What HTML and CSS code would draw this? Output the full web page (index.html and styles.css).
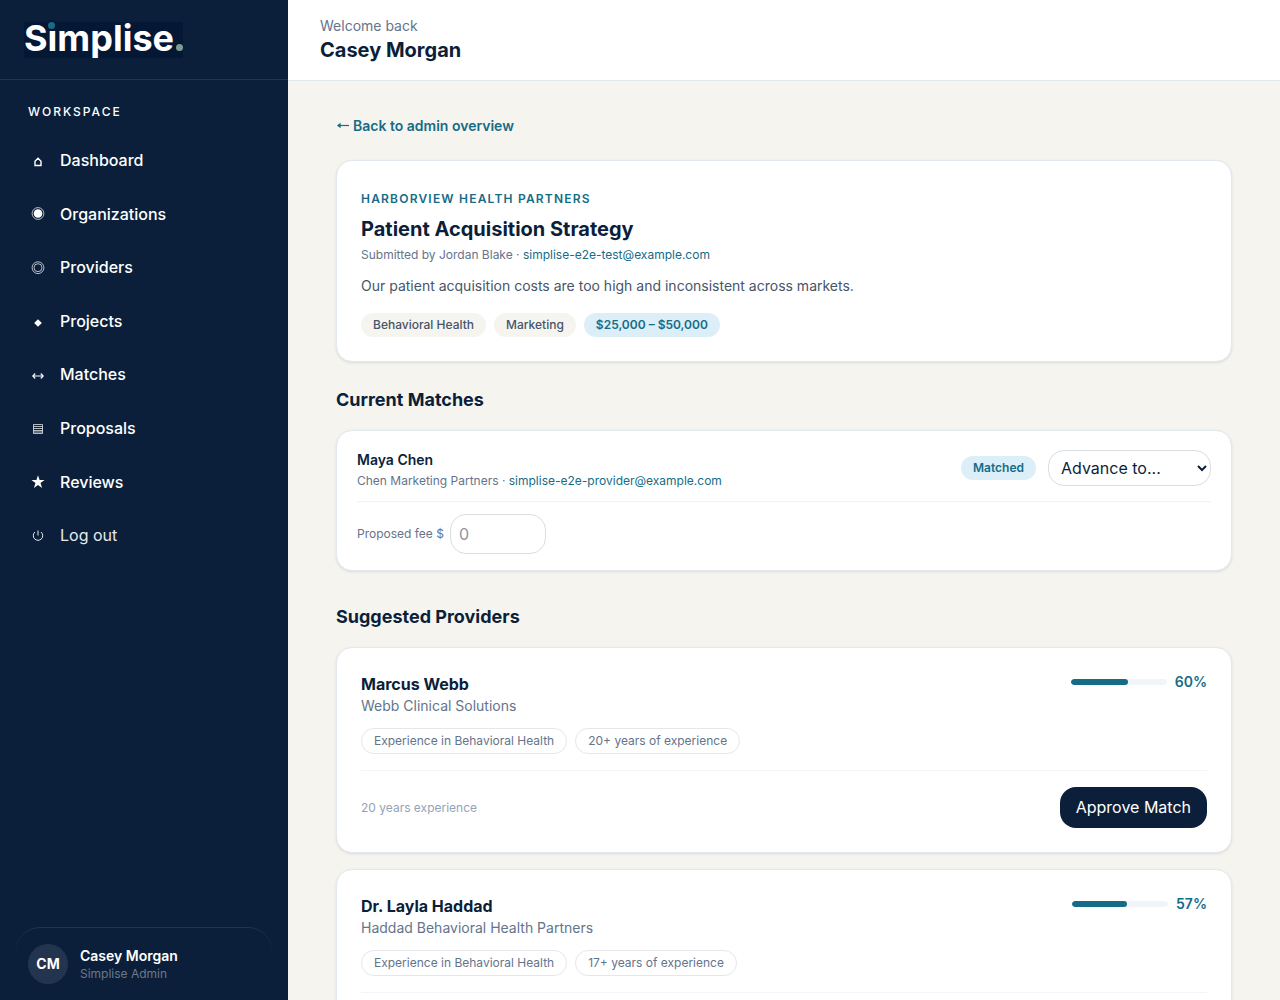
FILE: index.html
```html
<!DOCTYPE html>
<html lang="en">
<head>
<meta charset="utf-8">
<meta name="viewport" content="width=device-width, initial-scale=1">
<title>Patient Acquisition Strategy – Simplise</title>
<link rel="stylesheet" href="styles.css">
</head>
<body>
<div class="app">
  <aside class="sidebar">
    <div class="brand">
      <div class="logo">Simplise<span class="logo-dot"></span><span class="logo-tittle"></span></div>
    </div>
    <nav class="nav" aria-label="Workspace">
      <p class="nav-title">Workspace</p>
      <ul class="nav-list">
        <li><a class="nav-item" href="#"><svg class="nav-icon" viewBox="0 0 20 20" aria-hidden="true"><path d="M7 14.500v-4.300L10 7.200l3 3v4.300z" stroke-width="1.400"/></svg>Dashboard</a></li>
        <li><a class="nav-item" href="#"><svg class="nav-icon" viewBox="0 0 20 20" aria-hidden="true"><circle cx="10" cy="9.500" r="5.900" stroke-width=".7"/><circle class="solid" cx="10" cy="9.500" r="4.300"/></svg>Organizations</a></li>
        <li><a class="nav-item" href="#"><svg class="nav-icon" viewBox="0 0 20 20" aria-hidden="true"><circle cx="10" cy="9.700" r="5.900" stroke-width=".7"/><circle cx="10" cy="9.700" r="4" stroke-width=".7"/></svg>Providers</a></li>
        <li><a class="nav-item" href="#"><svg class="nav-icon" viewBox="0 0 20 20" aria-hidden="true"><path class="solid" d="M10 7.200l3.800 3.800-3.800 3.800L6.200 11z"/></svg>Projects</a></li>
        <li><a class="nav-item" href="#"><svg class="nav-icon" viewBox="0 0 20 20" aria-hidden="true"><path d="M4.800 11h10.400M7.200 8.500L4.800 11l2.400 2.500M12.800 8.500l2.400 2.500-2.400 2.500" stroke-width="1.100"/></svg>Matches</a></li>
        <li><a class="nav-item" href="#"><svg class="nav-icon" viewBox="0 0 20 20" aria-hidden="true"><path d="M5.500 5.500h9v9h-9zM5.500 7.500h9M5.500 9.500h9M5.500 11.500h9M5.500 13h9" stroke-width=".7"/></svg>Proposals</a></li>
        <li><a class="nav-item" href="#"><svg class="nav-icon" viewBox="0 0 20 20" aria-hidden="true"><path class="solid" d="M10 3.200l1.600 4.900h5l-4.100 3 1.600 4.900-4.100-3-4.100 3 1.600-4.900-4.100-3h5z"/></svg>Reviews</a></li>
        <li><button class="nav-item nav-logout" type="button"><svg class="nav-icon" viewBox="0 0 20 20" aria-hidden="true"><path d="M10 4.500v5M7 6a4.700 4.700 0 1 0 6 0" stroke-width="1"/></svg>Log out</button></li>
      </ul>
    </nav>
    <div class="user">
      <span class="avatar">CM</span>
      <div>
        <p class="user-name">Casey Morgan</p>
        <p class="user-role">Simplise Admin</p>
      </div>
    </div>
  </aside>

  <div class="page">
    <header class="topbar">
      <p class="welcome">Welcome back</p>
      <p class="topbar-name">Casey Morgan</p>
    </header>
    <main class="main">
      <div class="content">
        <a class="back" href="#"><svg class="back-arrow" viewBox="0 0 14 14" aria-hidden="true"><path d="M2 6.500h11" stroke="currentColor" stroke-width="1.200"/><path d="M1 6.500L4.600 3.700v5.600z" fill="currentColor"/></svg>Back to admin overview</a>

        <section class="card project">
          <p class="eyebrow">Harborview Health Partners</p>
          <h1 class="project-title">Patient Acquisition Strategy</h1>
          <p class="meta">Submitted by Jordan Blake · <a href="mailto:simplise-e2e-test@example.com">simplise-e2e-test@example.com</a></p>
          <p class="description">Our patient acquisition costs are too high and inconsistent across markets.</p>
          <div class="tags">
            <span class="tag">Behavioral Health</span>
            <span class="tag">Marketing</span>
            <span class="tag tag-blue">$25,000 – $50,000</span>
          </div>
        </section>

        <h2 class="section-title">Current Matches</h2>
        <section class="card match">
          <div class="match-top">
            <div>
              <p class="match-name">Maya Chen</p>
              <p class="meta">Chen Marketing Partners · <a href="mailto:simplise-e2e-provider@example.com">simplise-e2e-provider@example.com</a></p>
            </div>
            <div class="match-actions">
              <span class="tag tag-blue">Matched</span>
              <select class="advance" aria-label="Advance to">
                <option>Advance to...</option>
                <option>Proposal Sent</option>
              </select>
            </div>
          </div>
          <div class="fee">
            <label class="fee-label" for="fee">Proposed fee $</label>
            <input class="fee-input" id="fee" type="number" placeholder="0">
          </div>
        </section>

        <h2 class="section-title section-title-far">Suggested Providers</h2>
        <div class="providers">
          <article class="card provider">
            <div class="provider-top">
              <div>
                <h3 class="provider-name">Marcus Webb</h3>
                <p class="provider-org">Webb Clinical Solutions</p>
              </div>
              <div class="score"><span class="bar"><span class="bar-fill" style="width: 60%"></span></span>60%</div>
            </div>
            <div class="tags">
              <span class="tag tag-outline">Experience in Behavioral Health</span>
              <span class="tag tag-outline">20+ years of experience</span>
            </div>
            <div class="provider-foot">
              <span class="years">20 years experience</span>
              <button class="approve" type="button">Approve Match</button>
            </div>
          </article>
          <article class="card provider">
            <div class="provider-top">
              <div>
                <h3 class="provider-name">Dr. Layla Haddad</h3>
                <p class="provider-org">Haddad Behavioral Health Partners</p>
              </div>
              <div class="score"><span class="bar"><span class="bar-fill" style="width: 57%"></span></span>57%</div>
            </div>
            <div class="tags">
              <span class="tag tag-outline">Experience in Behavioral Health</span>
              <span class="tag tag-outline">17+ years of experience</span>
            </div>
            <div class="provider-foot">
              <span class="years">17 years experience</span>
              <button class="approve" type="button">Approve Match</button>
            </div>
          </article>
        </div>
      </div>
    </main>
  </div>
</div>
</body>
</html>
```
FILE: styles.css
```css
:root {
  --navy: #0b1f3a;
  --teal: #156c87;
  --cream: #f6f4ef;
  --sky: #dceef8;
  --slate: #64748b;
}

* { box-sizing: border-box; }

body {
  margin: 0;
  background: var(--cream);
  color: var(--navy);
  font-family: Inter, "Liberation Sans", sans-serif;
  font-size: 16px;
  line-height: 1.6;
}

p, h1, h2, h3, ul { margin: 0; padding: 0; }
ul { list-style: none; }
a { color: var(--teal); text-decoration: none; }
button, input, select { font: inherit; color: inherit; margin: 0; }

.app { display: flex; height: 100vh; }

/* Sidebar */
.sidebar {
  display: flex;
  flex-direction: column;
  flex: none;
  width: 288px;
  background: var(--navy);
  color: #fff;
}
.brand {
  padding: 22px 24px 21px;
  border-bottom: 1px solid #22344d;
}
.logo {
  position: relative;
  display: flex;
  width: 159px;
  height: 36px;
  background: #041835;
  font-size: 36px;
  font-weight: 700;
  line-height: 32px;
}
.logo-dot, .logo-tittle {
  position: absolute;
  width: 7px;
  height: 7px;
  border-radius: 50%;
}
.logo-dot { right: 0; bottom: 7px; background: #7a9e90; }
.logo-tittle { left: 24px; top: 0; background: #156c87; box-shadow: 0 0 0 2px #041835; }

.nav { flex: 1; padding: 20px 16px; }
.nav-title {
  padding: 0 12px;
  margin-bottom: 12px;
  font-size: 12px;
  font-weight: 500;
  line-height: 24px;
  letter-spacing: 2px;
  text-transform: uppercase;
}
.nav-list { display: flex; flex-direction: column; gap: 4px; }
.nav-item {
  display: flex;
  align-items: center;
  gap: 12px;
  width: 100%;
  padding: 12px;
  border: 0;
  background: none;
  color: #fff;
  font-weight: 500;
  text-align: left;
}
.nav-logout { font-weight: 400; color: #e7e9ec; }
.nav-icon { flex: none; width: 20px; height: 20px; fill: none; stroke: currentColor; }
.nav-icon .solid { fill: currentColor; stroke: none; }

.user {
  display: flex;
  align-items: center;
  gap: 12px;
  margin: 0 16px;
  padding: 16px 12px;
  border-top: 1px solid #22344d;
  border-radius: 24px;
}
.avatar {
  display: grid;
  place-items: center;
  width: 40px;
  height: 40px;
  border-radius: 50%;
  background: #23354e;
  font-size: 14px;
  font-weight: 700;
}
.user-name { font-size: 14px; font-weight: 600; line-height: 20px; }
.user-role { font-size: 12px; line-height: 16px; color: #6d7989; }

/* Page */
.page { flex: 1; min-width: 0; overflow-y: auto; scrollbar-width: none; }
.topbar {
  padding: 16px 32px;
  border-bottom: 1px solid #e2e8f0;
  background: #fff;
}
.welcome { font-size: 14px; line-height: 20px; color: var(--slate); }
.topbar-name { font-size: 20px; font-weight: 700; line-height: 28px; }

.main { padding: 32px; }
.content { max-width: 896px; margin: 0 auto; }
.back {
  display: flex;
  align-items: center;
  gap: 3px;
  margin-bottom: 21px;
  font-size: 14px;
  font-weight: 600;
  line-height: 26px;
}
.back-arrow { width: 14px; height: 14px; }
.card {
  border: 1px solid #e2e8f0;
  border-radius: 16px;
  background: #fff;
  box-shadow: 0 1px 3px rgba(0, 0, 0, .1);
}

.project { padding: 24px; }
.eyebrow {
  margin-top: 4px;
  font-size: 12px;
  font-weight: 600;
  line-height: 20px;
  letter-spacing: .1em;
  text-transform: uppercase;
  color: var(--teal);
}
.project-title { margin-top: 4px; font-size: 20px; font-weight: 700; line-height: 32px; }
.meta { font-size: 12px; line-height: 20px; color: var(--slate); }
.description { margin-top: 8px; font-size: 14px; line-height: 26px; color: #475569; }

.tags { display: flex; flex-wrap: wrap; gap: 8px; }
.project .tags { margin-top: 14px; }
.tag {
  padding: 2px 12px;
  border-radius: 16px;
  background: var(--cream);
  color: #475569;
  font-size: 12px;
  font-weight: 500;
  line-height: 20px;
}
.tag-blue { background: var(--sky); color: var(--teal); font-weight: 600; }
.tag-outline {
  border: 1px solid #e5e7eb;
  background: none;
  color: var(--slate);
  font-weight: 400;
}

.section-title { margin: 24px 0 16px; font-size: 18px; font-weight: 700; line-height: 28px; }
.section-title-far { margin-top: 32px; }

.match { padding: 19px 20px 16px; }
.match-top {
  display: flex;
  align-items: flex-start;
  justify-content: space-between;
  padding-bottom: 10px;
  border-bottom: 1px solid #f1f3f5;
}
.match-name { margin-bottom: 1px; font-size: 14px; font-weight: 600; line-height: 20px; }
.match-actions { display: flex; align-items: center; gap: 12px; }
.advance {
  width: 163px;
  height: 36px;
  padding: 0 8px;
  border: 1px solid #dadde2;
  border-radius: 16px;
  background: #fff;
}
.fee { display: flex; align-items: center; gap: 6px; padding-top: 12px; }
.fee-label { font-size: 12px; color: var(--slate); }
.fee-input {
  width: 96px;
  height: 40px;
  padding: 0 8px;
  border: 1px solid #dadde2;
  border-radius: 16px;
  background: #fff;
}
.fee-input::placeholder { color: #8e96a3; }

.providers { display: flex; flex-direction: column; gap: 16px; }
.provider { padding: 24px; }
.provider-top {
  display: flex;
  align-items: flex-start;
  justify-content: space-between;
  margin-bottom: 12px;
}
.provider-name { font-size: 16px; font-weight: 700; line-height: 24px; }
.provider-org { font-size: 14px; line-height: 20px; color: var(--slate); }
.score {
  display: flex;
  align-items: center;
  gap: 8px;
  font-size: 14px;
  font-weight: 600;
  line-height: 20px;
  color: var(--teal);
}
.bar { width: 96px; height: 6px; border-radius: 3px; background: #f1f5f9; overflow: hidden; }
.bar-fill { display: block; height: 100%; border-radius: 3px; background: var(--teal); }
.provider-foot {
  display: flex;
  align-items: center;
  justify-content: space-between;
  margin-top: 16px;
  padding-top: 16px;
  border-top: 1px solid #f1f5f9;
}
.years { font-size: 12px; line-height: 20px; color: #94a3b8; }
.approve {
  padding: 8px 16px;
  border: 0;
  border-radius: 16px;
  background: var(--navy);
  color: #fff;
  line-height: 25px;
}
```
